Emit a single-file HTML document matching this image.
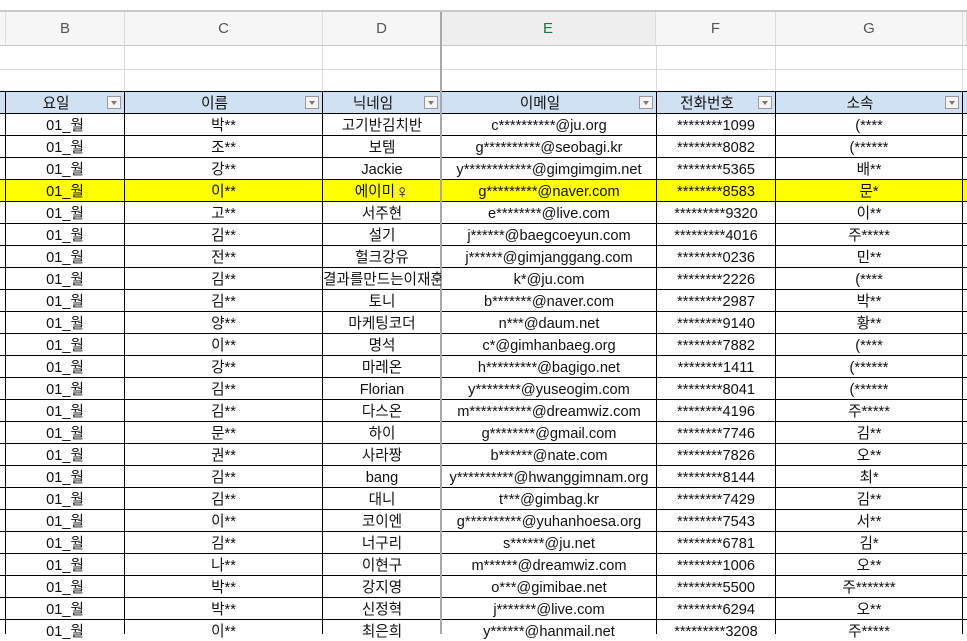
<!DOCTYPE html>
<html><head><meta charset="utf-8"><style>
body{margin:0;width:967px;height:634px;overflow:hidden;background:#fff;font-family:"Liberation Sans","Noto Sans CJK KR",sans-serif;position:relative}
.a{position:absolute}
.ch{top:12px;height:33px;background:#f6f6f6;color:#555;font-size:15px;line-height:33px;text-align:center;border-right:1px solid #dcdcdc;box-sizing:border-box}
.c{position:absolute;height:22px;line-height:22px;font-size:14.6px;text-align:center;color:#111;white-space:nowrap;overflow:hidden;padding-top:2px;box-sizing:border-box}
.f{position:absolute;top:96px;width:14px;height:13px;border:1px solid #999;background:#f4f4f4;box-sizing:border-box}
.f:after{content:"";position:absolute;left:3px;top:4px;border-left:3.5px solid transparent;border-right:3.5px solid transparent;border-top:4px solid #777}
.fe{font-size:19px;line-height:10px;vertical-align:-2px}
</style></head><body>
<div class="a" style="left:0;top:10px;width:967px;height:2px;background:#c8c8c8"></div>
<div class="a ch" style="left:0;width:6px"></div>
<div class="a ch" style="left:6px;width:119px">B</div>
<div class="a ch" style="left:125px;width:198px">C</div>
<div class="a ch" style="left:323px;width:118px">D</div>
<div class="a ch" style="left:441px;width:215px;background:#eeeeee;color:#207245">E</div>
<div class="a ch" style="left:656px;width:120px">F</div>
<div class="a ch" style="left:776px;width:187px">G</div>
<div class="a ch" style="left:963px;width:4px"></div>
<div class="a" style="left:0;top:45px;width:967px;height:1px;background:#c8c8c8"></div>
<div class="a" style="left:0;top:69px;width:967px;height:1px;background:#d8d8d8"></div>
<svg class="a" style="left:0;top:46px" width="967" height="45"><g stroke="#d8d8d8"><line x1="124.5" y1="0" x2="124.5" y2="45"/><line x1="322.5" y1="0" x2="322.5" y2="45"/><line x1="656.5" y1="0" x2="656.5" y2="45"/><line x1="775.5" y1="0" x2="775.5" y2="45"/><line x1="962.5" y1="0" x2="962.5" y2="45"/></g></svg>
<div class="a" style="left:0;top:91px;width:967px;height:22px;background:#cfe1f2"></div>
<div id="y" class="a" style="left:0;top:179px;width:967px;height:22px;background:#ffff00"></div>
<svg class="a" style="left:0;top:0" width="967" height="634" id="g"></svg>
<div class="f" style="left:107px"></div>
<div class="f" style="left:305px"></div><div class="f" style="left:424px"></div><div class="f" style="left:639px"></div><div class="f" style="left:758px"></div><div class="f" style="left:945px"></div>
<div id="t"></div>
<script>
var cols=[[6,118],[125,197],[323,118],[442,214],[657,118],[776,186]];
var H=[["요일","이름","닉네임","이메일","전화번호","소속"]];
var d=`박**|고기반김치반|c**********@ju.org|********1099|(****
조**|보템|g**********@seobagi.kr|********8082|(******
강**|Jackie|y************@gimgimgim.net|********5365|배**
이**|에이미<span class="fe">♀</span>|g*********@naver.com|********8583|문*
고**|서주현|e********@live.com|*********9320|이**
김**|설기|j******@baegcoeyun.com|*********4016|주*****
전**|헐크강유|j******@gimjanggang.com|********0236|민**
김**|결과를만드는이재훈|k*@ju.com|********2226|(****
김**|토니|b*******@naver.com|********2987|박**
양**|마케팅코더|n***@daum.net|********9140|황**
이**|명석|c*@gimhanbaeg.org|********7882|(****
강**|마레온|h*********@bagigo.net|********1411|(******
김**|Florian|y********@yuseogim.com|********8041|(******
김**|다스온|m***********@dreamwiz.com|********4196|주*****
문**|하이|g********@gmail.com|********7746|김**
권**|사라짱|b******@nate.com|********7826|오**
김**|bang|y**********@hwanggimnam.org|********8144|최*
김**|대니|t***@gimbag.kr|********7429|김**
이**|코이엔|g**********@yuhanhoesa.org|********7543|서**
김**|너구리|s******@ju.net|********6781|김*
나**|이현구|m******@dreamwiz.com|********1006|오**
박**|강지영|o***@gimibae.net|********5500|주*******
박**|신정혁|j*******@live.com|********6294|오**
이**|최은희|y******@hanmail.net|*********3208|주*****`.split("\n");
var h="";
function row(v,top,hd){for(var i=0;i<6;i++){var w=cols[i][1]-(hd?18:0);h+='<div class="c" style="left:'+cols[i][0]+'px;top:'+top+'px;width:'+w+'px">'+v[i]+'</div>';}}
row(H[0],91,1);
d.forEach(function(l,k){row(["01_월"].concat(l.split("|")),113+22*k,0)});
document.getElementById("t").innerHTML=h;
var s="";
for(var y=91;y<640;y+=22)s+='<line x1="0" y1="'+(y+.5)+'" x2="967" y2="'+(y+.5)+'" stroke="#000"/>';
[5,124,322,656,775,962].forEach(function(x){s+='<line x1="'+(x+.5)+'" y1="91" x2="'+(x+.5)+'" y2="634" stroke="#000"/>'});
s+='<line x1="441" y1="12" x2="441" y2="634" stroke="#a8a8a8" stroke-width="2"/>';
document.getElementById("g").innerHTML=s;
</script>
</body></html>
